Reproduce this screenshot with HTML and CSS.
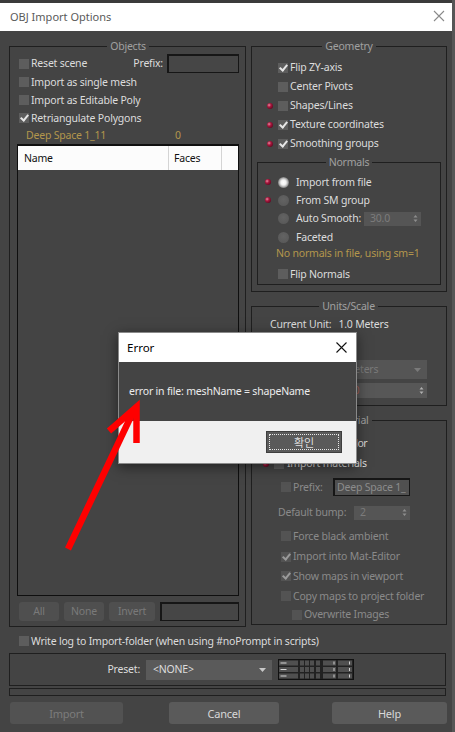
FILE: index.html
```html
<!DOCTYPE html>
<html>
<head>
<meta charset="utf-8">
<title>OBJ Import Options</title>
<link rel="stylesheet" href="styles.css">
</head>
<body>
<div class="window">
  <div class="titlebar">
    <span class="title">OBJ Import Options</span>
    <svg class="close" width="12" height="12" viewBox="0 0 12 12"><path d="M1 1L11 11M11 1L1 11" stroke="#8a8a8a" stroke-width="1.1" fill="none"/></svg>
  </div>
  <div class="content">
    <div class="columns">
      <fieldset class="group objects">
        <legend>Objects</legend>
        <div class="row h19 ind2"><span class="cb"></span><span class="lbl">Reset scene</span><span class="prefix-lbl">Prefix:</span><span class="field prefix-in"></span></div>
        <div class="row h18 ind2"><span class="cb"></span><span class="lbl">Import as single mesh</span></div>
        <div class="row h18 ind2"><span class="cb"></span><span class="lbl">Import as Editable Poly</span></div>
        <div class="row h18 ind2"><span class="cb on"></span><span class="lbl">Retriangulate Polygons</span></div>
        <div class="row h17 deep"><span class="deep-name">Deep Space 1_11</span><span>0</span></div>
        <div class="list">
          <div class="list-head"><span class="c-name">Name</span><span class="c-faces">Faces</span><span class="c-rest"></span></div>
        </div>
        <div class="list-btns">
          <span class="lbtn w40">All</span>
          <span class="lbtn w40">None</span>
          <span class="lbtn w46">Invert</span>
          <span class="field grow"></span>
        </div>
      </fieldset>

      <div class="right">
        <fieldset class="group geometry">
          <legend>Geometry</legend>
          <div class="row h19 geo"><span class="slot"></span><span class="cb on"></span><span class="lbl">Flip ZY-axis</span></div>
          <div class="row h19 geo"><span class="slot"></span><span class="cb"></span><span class="lbl">Center Pivots</span></div>
          <div class="row h19 geo"><span class="slot red"></span><span class="cb"></span><span class="lbl">Shapes/Lines</span></div>
          <div class="row h19 geo"><span class="slot red"></span><span class="cb on"></span><span class="lbl">Texture coordinates</span></div>
          <div class="row h19 geo"><span class="slot red"></span><span class="cb on"></span><span class="lbl">Smoothing groups</span></div>
          <fieldset class="group normals">
            <legend>Normals</legend>
            <div class="row h18 nrow"><span class="slot red"></span><span class="radio on"></span><span class="lbl">Import from file</span></div>
            <div class="row h18 nrow"><span class="slot red"></span><span class="radio"></span><span class="lbl">From SM group</span></div>
            <div class="row h19 nrow auto"><span class="slot"></span><span class="radio"></span><span class="lbl">Auto Smooth:</span>
              <span class="spinner sp-auto"><span>30.0</span><svg width="5" height="9" viewBox="0 0 5 9"><path d="M0.5 3.5L2.5 1L4.5 3.5Z M0.5 5.5L2.5 8L4.5 5.5Z" fill="#8e8e8e"/></svg></span>
            </div>
            <div class="row h18 nrow"><span class="slot"></span><span class="radio"></span><span class="lbl">Faceted</span></div>
            <div class="row h15 gold">No normals in file, using sm=1</div>
            <div class="row h18 flipn"><span class="cb"></span><span class="lbl">Flip Normals</span></div>
          </fieldset>
        </fieldset>

        <fieldset class="group units">
          <legend>Units/Scale</legend>
          <div class="row h18"><span>Current Unit:</span><span class="unit-val">1.0 Meters</span></div>
          <div class="row h19"><span class="cb on"></span><span class="lbl">Convert</span></div>
          <div class="row h19 mt8"><span class="dropdown dd-units dis"><span>Meters</span><svg width="7" height="4" viewBox="0 0 7 4"><path d="M0 0H7L3.5 4Z" fill="#7a7a7a"/></svg></span></div>
          <div class="row h15 mt4"><span class="spinner sp-units"><span class="red-val">1.0</span><svg width="5" height="9" viewBox="0 0 5 9"><path d="M0.5 3.5L2.5 1L4.5 3.5Z M0.5 5.5L2.5 8L4.5 5.5Z" fill="#b0b0b0"/></svg></span></div>
        </fieldset>

        <fieldset class="group material">
          <legend>Material</legend>
          <div class="row h19 mrow"><span class="slot6 red"></span><span class="cb"></span><span class="lbl3 tight">Unique Wire Color</span></div>
          <div class="row h21 mrow"><span class="slot6 red"></span><span class="cb"></span><span class="lbl3">Import materials</span></div>
          <div class="row h26 msub dis-t"><span class="cb dis"></span><span class="lbl">Prefix:</span><span class="field mat-prefix">Deep Space 1_</span></div>
          <div class="row h25 mbump dis-t"><span>Default bump:</span><span class="spinner sp-bump"><span>2</span><svg width="5" height="9" viewBox="0 0 5 9"><path d="M0.5 3.5L2.5 1L4.5 3.5Z M0.5 5.5L2.5 8L4.5 5.5Z" fill="#8e8e8e"/></svg></span></div>
          <div class="row h22 msub dis-t"><span class="cb dis"></span><span class="lbl">Force black ambient</span></div>
          <div class="row h19 msub dis-t"><span class="cb dis on"></span><span class="lbl">Import into Mat-Editor</span></div>
          <div class="row h20 msub dis-t"><span class="cb dis on"></span><span class="lbl">Show maps in viewport</span></div>
          <div class="row h20 msub dis-t"><span class="cb dis"></span><span class="lbl">Copy maps to project folder</span></div>
          <div class="row h17 msub2 dis-t"><span class="cb dis"></span><span class="lbl">Overwrite Images</span></div>
        </fieldset>
      </div>
    </div>

    <div class="row h18 logrow"><span class="cb"></span><span class="lbl">Write log to Import-folder (when using #noPrompt in scripts)</span></div>

    <div class="presetbox">
      <span class="preset-lbl">Preset:</span>
      <span class="dropdown dd-preset"><span>&lt;NONE&gt;</span><svg width="7" height="4" viewBox="0 0 7 4"><path d="M0 0H7L3.5 4Z" fill="#c8c8c8"/></svg></span>
      <svg class="gridicon" width="76" height="21" viewBox="0 0 76 21">
        <defs>
          <g id="gr">
            <rect x="1" y="0" width="19" height="5" fill="#505050"/>
            <rect x="2.5" y="2" width="6" height="1" fill="#d8d8d8"/>
            <rect x="22" y="0" width="4" height="5" fill="#505050"/>
            <rect x="27" y="0" width="4" height="5" fill="#505050"/>
            <rect x="32" y="0" width="4" height="5" fill="#505050"/>
            <rect x="38" y="0" width="4" height="5" fill="#505050"/>
            <rect x="45" y="0" width="13" height="5" fill="#505050"/>
            <rect x="55.5" y="1" width="1" height="3" fill="#cfcfcf"/>
            <rect x="60" y="0" width="14" height="5" fill="#505050"/>
            <rect x="71" y="1" width="1" height="3" fill="#cfcfcf"/>
          </g>
        </defs>
        <rect x="0.5" y="0.5" width="75" height="20" fill="#222" stroke="#111"/>
        <use href="#gr" x="0" y="1.5"/>
        <use href="#gr" x="0" y="8"/>
        <use href="#gr" x="0" y="14.5"/>
      </svg>
    </div>

    <div class="thinbar"></div>

    <div class="btns">
      <span class="btn import">Import</span>
      <span class="btn cancel">Cancel</span>
      <span class="btn help">Help</span>
    </div>
  </div>
</div>

<div class="dialog">
  <div class="d-title">
    <span>Error</span>
    <svg width="11" height="11" viewBox="0 0 11 11"><path d="M0.5 0.5L10.5 10.5M10.5 0.5L0.5 10.5" stroke="#111" stroke-width="1.1" fill="none"/></svg>
  </div>
  <div class="d-body">error in file: meshName = shapeName</div>
  <div class="d-foot"><span class="d-btn">확인</span></div>
</div>

<svg class="arrow" width="455" height="732" viewBox="0 0 455 732">
  <path d="M68 549L134 410" stroke="#ff0000" stroke-width="6.5" fill="none"/>
  <path d="M109 431L136.5 407L136.5 443" stroke="#ff0000" stroke-width="6.5" fill="none" stroke-linejoin="miter" stroke-miterlimit="10"/>
</svg>
</body>
</html>
```

FILE: styles.css
```css
* { box-sizing: border-box; }
html, body { margin: 0; padding: 0; }
body {
  width: 455px;
  height: 732px;
  overflow: hidden;
  position: relative;
  background: #565656;
  font-family: "Noto Sans", "Open Sans", "DejaVu Sans", sans-serif;
  font-size: 10.5px;
  letter-spacing: -0.2px;
  line-height: 13px;
  color: #dcdcdc;
}

.window {
  width: 452px;
  height: 732px;
  background: #444;
  border-top: 3px solid #3b3b3b;
}

.titlebar {
  height: 28px;
  background: #fff;
  display: flex;
  align-items: center;
  justify-content: space-between;
  padding: 0 7px 2px 10px;
  color: #5a5a5a;
  font-size: 11px;
  letter-spacing: 0;
}

.content { padding: 9px 5px 0 9px; }

.columns {
  display: flex;
  gap: 5px;
  align-items: flex-start;
}

.group {
  margin: 0;
  padding: 0;
  border: 1px solid #1f1f1f;
  min-width: 0;
}
.group > legend {
  margin: 0 auto;
  padding: 0 3px;
  height: 12px;
  line-height: 12px;
  color: #a0a0a0;
}

.row {
  display: flex;
  align-items: center;
  white-space: nowrap;
}
.h15 { height: 15px; }
.h17 { height: 17px; }
.h18 { height: 18px; }
.h19 { height: 19px; }
.h20 { height: 20px; }
.h21 { height: 21px; }
.h22 { height: 22px; }
.h25 { height: 25px; }
.h26 { height: 26px; }
.mt4 { margin-top: 4px; }
.mt8 { margin-top: 8px; }

.cb {
  width: 10px;
  height: 10px;
  background: #5d5d5d;
  flex: none;
  position: relative;
}
.cb.on::after {
  content: "";
  position: absolute;
  left: 3px;
  top: 0;
  width: 3px;
  height: 6px;
  border: solid #e6e6e6;
  border-width: 0 2px 2px 0;
  transform: rotate(40deg);
}
.cb.dis { background: #535353; }
.cb.dis.on::after { border-color: #9a9a9a; }
.lbl { margin-left: 2px; }
.lbl3 { margin-left: 3px; }
.tight { letter-spacing: -0.6px; }
.dis-t { color: #8a8a8a; }

.field {
  display: block;
  background: #464646;
  border: 1px solid #161616;
  border-top-width: 2px;
  border-left-width: 2px;
}

/* Objects */
.objects {
  width: 237px;
  padding: 2px 6px 5px 7px;
}
.ind2 { padding-left: 2px; }
.prefix-lbl { margin-left: auto; margin-right: 4px; }
.prefix-in { width: 72px; height: 19px; }
.deep { padding-left: 9px; color: #b3964c; }
.deep-name { width: 149px; }

.list {
  height: 452px;
  border: 1px solid #0f0f0f;
  border-top-width: 2px;
}
.list-head {
  height: 24px;
  background: #fcfcfc;
  color: #111;
  display: grid;
  grid-template-columns: 151px 53px 1fr;
}
.list-head span {
  display: flex;
  align-items: center;
  border-right: 1px solid #d4d4d4;
}
.c-name { padding-left: 6px; }
.c-faces { padding-left: 5px; }
.list-head .c-rest { border-right: none; }

.list-btns {
  display: flex;
  gap: 5px;
  margin-top: 6px;
  padding-left: 2px;
  height: 19px;
}
.lbtn {
  background: #4f4f4f;
  color: #7a7a7a;
  border-radius: 3px;
  display: flex;
  align-items: center;
  justify-content: center;
}
.w40 { width: 40px; }
.w46 { width: 46px; }
.grow { flex: 1; }

/* right column */
.right {
  width: 196px;
  display: flex;
  flex-direction: column;
}
.geometry { padding: 6px 0 6px 0; }
.geo { padding-left: 13px; }
.slot {
  width: 10px;
  height: 6px;
  margin-right: 3px;
  flex: none;
  display: flex;
  justify-content: center;
}
.slot6 {
  width: 6px;
  height: 6px;
  margin-right: 5px;
  flex: none;
  display: flex;
}
.slot.red::before, .slot6.red::before {
  content: "";
  width: 6px;
  height: 6px;
  border-radius: 50%;
  background: radial-gradient(circle at 35% 35%, #e88aa0 0, #a8183e 35%, #6e0a26 70%, #3e0414 100%);
}

.normals {
  margin: 3px 5px 0 5px;
  padding: 5px 0 1px 0;
}
.nrow { padding-left: 5px; }
.nrow .slot { margin-right: 5px; }
.nrow .lbl { margin-left: 7px; }
.radio {
  width: 11px;
  height: 11px;
  border-radius: 50%;
  background: radial-gradient(circle at 50% 40%, #636363, #565656);
  flex: none;
}
.radio.on {
  background: radial-gradient(circle, #ffffff 0, #f2f2f2 2.5px, #bdbdbd 4px, #7a7a7a 5.5px);
}
.auto { padding-right: 19px; }

.spinner {
  display: flex;
  align-items: center;
  justify-content: space-between;
  background: #555;
  color: #7c7c7c;
  padding: 0 3px 0 6px;
  flex: none;
}
.sp-auto { margin-left: auto; width: 57px; height: 14px; }

.gold { color: #b3964c; padding-left: 18px; }
.flipn { margin-top: 4px; padding-left: 20px; }

.units {
  margin-top: 8px;
  padding: 3px 19px 7px 18px;
}
.unit-val { margin-left: 7px; }
.dropdown {
  display: flex;
  align-items: center;
  justify-content: space-between;
  background: #5a5a5a;
  color: #dcdcdc;
}
.dropdown.dis { background: #555; color: #7a7a7a; }
.dd-units {
  margin-left: auto;
  width: 89px;
  height: 19px;
  padding: 0 6px 0 7px;
}
.sp-units {
  margin-left: auto;
  width: 89px;
  height: 15px;
  background: #575757;
  padding: 0 3px 0 7px;
}
.red-val { color: #a45e52; }

.material {
  margin-top: 8px;
  padding: 8px 0 1px 0;
}
.mrow { padding-left: 11px; }
.msub { padding-left: 29px; padding-right: 36px; }
.msub2 { padding-left: 40px; }
.mbump { padding-left: 26px; padding-right: 36px; }
.mat-prefix {
  margin-left: auto;
  width: 77px;
  height: 18px;
  background: #505050;
  color: #8c8c8c;
  padding-left: 2px;
  line-height: 14px;
  overflow: hidden;
}
.sp-bump { margin-left: auto; width: 56px; height: 14px; }

/* bottom */
.logrow { margin-top: 5px; padding-left: 10px; }

.presetbox {
  margin-top: 3px;
  width: 437px;
  height: 33px;
  border: 1px solid #1f1f1f;
  display: grid;
  grid-template-columns: 130px 126px 76px;
  column-gap: 6px;
  align-items: center;
}
.preset-lbl { text-align: right; }
.dd-preset {
  height: 20px;
  padding: 0 6px 0 7px;
}
.gridicon { display: block; }

.thinbar {
  margin-top: 2px;
  width: 437px;
  height: 8px;
  border: 1px solid #1f1f1f;
}

.btns {
  display: flex;
  margin-top: 6px;
  height: 22px;
  padding-left: 1px;
}
.btn {
  display: flex;
  align-items: center;
  justify-content: center;
  border-radius: 3px;
  background: #5a5a5a;
  color: #d8d8d8;
  font-size: 11px;
}
.import { width: 113px; background: #525252; color: #7c7c7c; }
.cancel { width: 110px; margin-left: 46px; }
.help { width: 115px; margin-left: 53px; }

/* error dialog (overlay) */
.dialog {
  position: absolute;
  left: 118px;
  top: 332px;
  width: 239px;
  height: 132px;
  background: #444;
  border: 1px solid #8a8a8a;
  box-shadow: 0 3px 12px rgba(0, 0, 0, 0.5);
  display: flex;
  flex-direction: column;
}
.d-title {
  height: 29px;
  background: #fff;
  color: #000;
  font-size: 11.5px;
  letter-spacing: 0;
  display: flex;
  align-items: center;
  justify-content: space-between;
  padding: 0 9px 0 8px;
}
.d-body {
  height: 59px;
  display: flex;
  align-items: center;
  padding-left: 10px;
  color: #ececec;
  letter-spacing: -0.2px;
}
.d-foot {
  flex: 1;
  background: #f0f0f0;
  display: flex;
  justify-content: flex-end;
  align-items: flex-start;
  padding: 10px 14px 0 0;
}
.d-btn {
  width: 76px;
  height: 22px;
  background: #5a5a5a;
  border: 1px solid #3e3e3e;
  outline: 1px dotted #e8e8e8;
  outline-offset: -4px;
  color: #dedede;
  font-family: "Noto Sans CJK KR", "Noto Sans", sans-serif;
  font-size: 11px;
  letter-spacing: 0;
  display: flex;
  align-items: center;
  justify-content: center;
}

.arrow {
  position: absolute;
  left: 0;
  top: 0;
  pointer-events: none;
}
```
